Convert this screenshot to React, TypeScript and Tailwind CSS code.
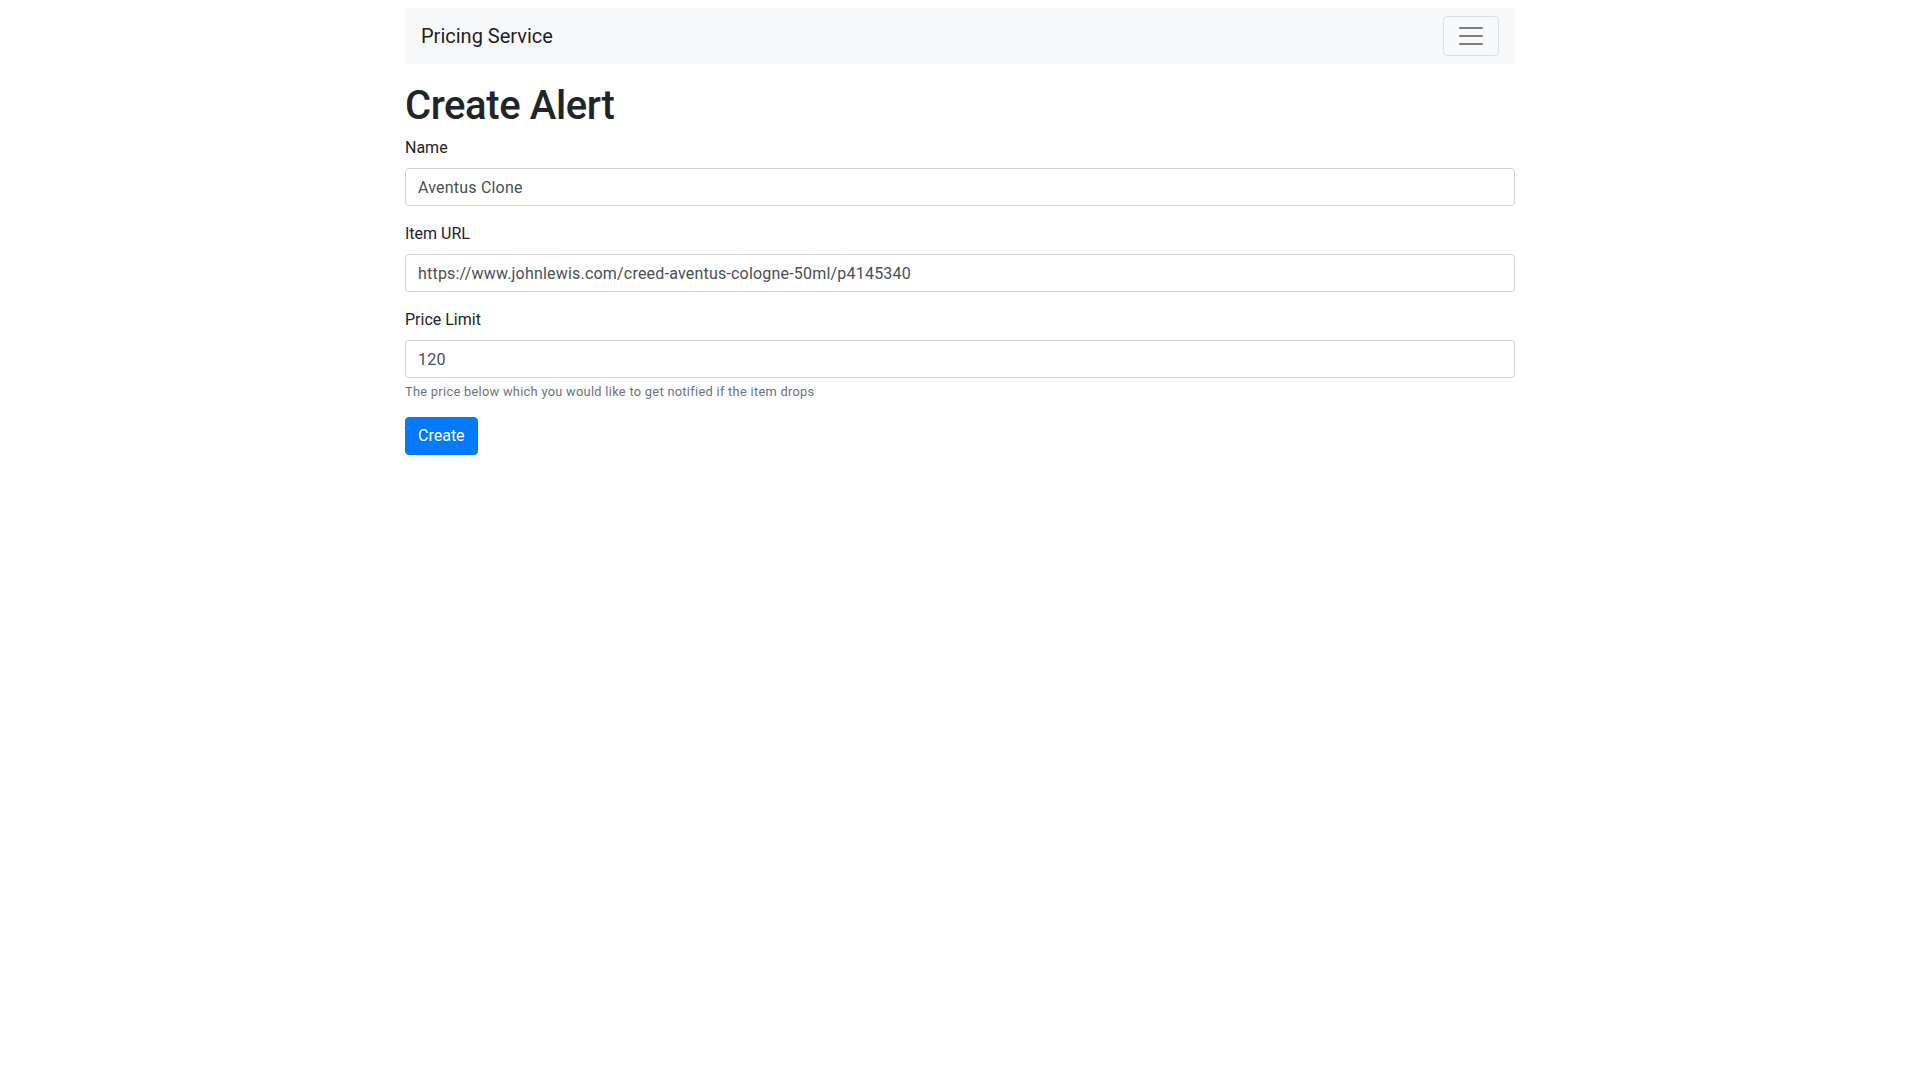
import React from 'react';

const Field: React.FC<{ label: string; value: string; help?: string }> = ({ label, value, help }) => {
  return (
    <div className="mb-4">
      <label className="mb-2 block text-base leading-6">{label}</label>
      <input
        type="text"
        defaultValue={value}
        className="block h-[38px] w-full rounded border border-[#ced4da] bg-white px-3 py-1.5 text-base leading-6 tracking-[0.2px] text-[#495057] outline-none"
      />
      {help && (
        <small className="mt-1 block text-[12.8px] leading-[19.2px] tracking-[0.3px] text-[#6c757d]">{help}</small>
      )}
    </div>
  );
};

const App: React.FC = () => {
  return (
    <div className="min-h-screen bg-white font-[Roboto,sans-serif] text-[#212529]">
      <div className="mx-auto w-[1140px] px-[15px] pt-2">
        <nav className="flex h-14 items-center justify-between bg-[#f8f9fa] px-4 py-2">
          <a className="text-xl leading-[30px] text-black/90">Pricing Service</a>
          <button className="flex h-10 w-14 items-center justify-center rounded border border-black/10">
            <svg width="30" height="30" viewBox="0 0 30 30">
              <path d="M4 7h22M4 15h22M4 23h22" stroke="rgba(0,0,0,0.5)" strokeWidth="2" strokeLinecap="round" />
            </svg>
          </button>
        </nav>

        <h1 className="mt-[18px] mb-[6px] text-[40px] leading-[48px] font-medium tracking-[-0.4px]">Create Alert</h1>

        <form>
          <Field label="Name" value="Aventus Clone" />
          <Field label="Item URL" value="https://www.johnlewis.com/creed-aventus-cologne-50ml/p4145340" />
          <Field
            label="Price Limit"
            value="120"
            help="The price below which you would like to get notified if the item drops"
          />
          <button
            type="button"
            className="h-[38px] rounded border border-[#007bff] bg-[#007bff] px-3 text-base leading-6 text-white"
          >
            Create
          </button>
        </form>
      </div>
    </div>
  );
};

export default App;
